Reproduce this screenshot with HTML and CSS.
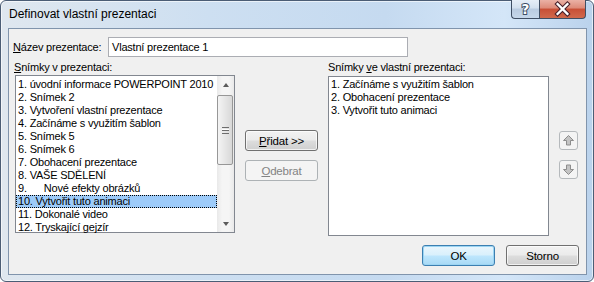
FILE: index.html
```html
<!DOCTYPE html>
<html lang="cs">
<head>
    <meta charset="UTF-8">
    <title>Definovat vlastní prezentaci</title>
    <link rel="stylesheet" href="styles.css">
</head>
<body>

    <!-- Dialog window -->
    <div class="window">

        <!-- Title bar -->
        <div class="titlebar">
            <span class="title">Definovat vlastní prezentaci</span>
            <div class="caption-buttons">
                <div class="cap-btn help">
                    <svg width="28" height="18" viewBox="0 0 28 18">
                        <text x="14" y="14" text-anchor="middle" class="cap-glyph">?</text>
                    </svg>
                </div>
                <div class="cap-btn close">
                    <svg width="46" height="18" viewBox="0 0 46 18">
                        <path d="M18 4 L28 14 M28 4 L18 14" stroke="#47202a" stroke-width="4.6" stroke-linecap="square"/>
                        <path d="M18 4 L28 14 M28 4 L18 14" stroke="#ffffff" stroke-width="2.4" stroke-linecap="square"/>
                    </svg>
                </div>
            </div>
        </div>

        <!-- Client area -->
        <div class="client">
            <div class="name-row">
                <span class="name-label"><u>N</u>ázev prezentace:</span>
                <div class="textbox">Vlastní prezentace 1</div>
            </div>

            <div class="main">
                <!-- All slides -->
                <div class="col col-left">
                    <div class="col-label"><u>S</u>nímky v prezentaci:</div>
                    <div class="listbox">
                        <div class="items">
                            <div class="item">1. úvodní informace POWERPOINT 2010</div>
                            <div class="item">2. Snímek 2</div>
                            <div class="item">3. Vytvoření vlastní prezentace</div>
                            <div class="item">4. Začínáme s využitím šablon</div>
                            <div class="item">5. Snímek 5</div>
                            <div class="item">6. Snímek 6</div>
                            <div class="item">7. Obohacení prezentace</div>
                            <div class="item">8. VAŠE SDĚLENÍ</div>
                            <div class="item">9.<span class="tab">Nové efekty obrázků</span></div>
                            <div class="item selected">10. Vytvořit tuto animaci</div>
                            <div class="item">11. Dokonalé video</div>
                            <div class="item">12. Tryskající gejzír</div>
                        </div>
                        <div class="scrollbar">
                            <div class="sb-arrow"><span class="tri-up"></span></div>
                            <div class="sb-track">
                                <div class="sb-thumb">
                                    <span class="grip"></span>
                                </div>
                            </div>
                            <div class="sb-arrow"><span class="tri-down"></span></div>
                        </div>
                    </div>
                </div>

                <!-- Add / remove -->
                <div class="mid">
                    <div class="btn"><u>P</u>řidat &gt;&gt;</div>
                    <div class="btn disabled"><u>O</u>debrat</div>
                </div>

                <!-- Custom show slides -->
                <div class="col col-right">
                    <div class="col-label right-label">Snímky <u>v</u>e vlastní prezentaci:</div>
                    <div class="listbox tall">
                        <div class="items plain">
                            <div class="item">1. Začínáme s využitím šablon</div>
                            <div class="item">2. Obohacení prezentace</div>
                            <div class="item">3. Vytvořit tuto animaci</div>
                        </div>
                    </div>
                </div>

                <!-- Move up / down -->
                <div class="arrows">
                    <div class="arrow-btn">
                        <svg width="17" height="17" viewBox="0 0 17 17">
                            <polygon points="8.5,3.5 13.5,8.5 10.5,8.5 10.5,13 6.5,13 6.5,8.5 3.5,8.5" fill="#c4c4c4" stroke="#8d8d8d" stroke-width="1"/>
                        </svg>
                    </div>
                    <div class="arrow-btn">
                        <svg width="17" height="17" viewBox="0 0 17 17">
                            <polygon points="8.5,13.5 13.5,8.5 10.5,8.5 10.5,4 6.5,4 6.5,8.5 3.5,8.5" fill="#c4c4c4" stroke="#8d8d8d" stroke-width="1"/>
                        </svg>
                    </div>
                </div>
            </div>

            <div class="footer">
                <div class="btn default">OK</div>
                <div class="btn">Storno</div>
            </div>
        </div>
    </div>

</body>
</html>
```

FILE: styles.css
```css
/* General */
body {
    margin: 0;
    padding: 0;
    font-family: 'Liberation Sans', Arial, sans-serif;
    font-size: 11px;
    color: #000;
    background: #ffffff;
}

u {
    text-decoration: underline;
    text-underline-offset: 1px;
}

/* Window frame */
.window {
    width: 594px;
    height: 282px;
    box-sizing: border-box;
    border: 1px solid #4b5d75;
    border-radius: 6px;
    padding: 0 6px 6px 7px;
    display: flex;
    flex-direction: column;
    background: linear-gradient(to right, #dfe7ef 0%, #cddff1 35%, #c5daf0 65%, #d4e6f8 85%, #bad2ec 100%);
    box-shadow: inset 0 0 0 1px rgba(255, 255, 255, 0.6);
}

/* Title bar */
.titlebar {
    height: 27px;
    display: flex;
    align-items: flex-start;
    justify-content: space-between;
}

.title {
    font-size: 12px;
    line-height: 27px;
    padding-left: 1px;
    color: #000;
}

.caption-buttons {
    display: flex;
    margin-right: 1px;
    margin-top: -1px;
}

.cap-btn {
    height: 18px;
    border: 1px solid #3f4e63;
    border-top: none;
    display: flex;
}

.cap-btn.help {
    width: 27px;
    border-radius: 0 0 0 4px;
    border-right: none;
    background: linear-gradient(#e6eef7 0%, #d3e0ee 45%, #b9cbe0 50%, #c6d7ea 100%);
}

.cap-btn.close {
    width: 45px;
    border-radius: 0 0 4px 0;
    background: linear-gradient(#eab1a5 0%, #dd8a78 45%, #c84f36 50%, #d0694c 100%);
}

.cap-glyph {
    font-family: 'DejaVu Sans', sans-serif;
    font-weight: bold;
    font-size: 14px;
    fill: #ffffff;
    stroke: #3d4f66;
    stroke-width: 2px;
    paint-order: stroke;
}

/* Client area */
.client {
    flex: 1;
    background: #f0f0f0;
    border: 1px solid #8094ac;
    padding: 8px 7px 8px 4px;
    display: flex;
    flex-direction: column;
    letter-spacing: -0.2px;
}

.name-row {
    display: flex;
    align-items: center;
    height: 20px;
}

.name-label {
    width: 95px;
}

.textbox {
    width: 295px;
    height: 18px;
    border: 1px solid #abadb3;
    background: #fff;
    line-height: 18px;
    padding-left: 3px;
    box-sizing: content-box;
}

/* Lists */
.main {
    display: flex;
    margin-top: 4px;
    height: 175px;
}

.col {
    width: 221px;
    display: flex;
    flex-direction: column;
}

.col-left {
    margin-left: 1px;
}

.col-label {
    height: 14px;
    line-height: 13px;
}

.right-label {
    height: 15px;
}

.listbox {
    height: 158px;
    margin-left: 1px;
    border: 1px solid #828790;
    background: #fff;
    display: flex;
    box-sizing: border-box;
}

.listbox.tall {
    height: 160px;
    margin-left: 0;
}

.items {
    flex: 1;
    padding-top: 2px;
}

.items.plain {
    padding-top: 1px;
}

.item {
    height: 13px;
    line-height: 13px;
    padding-left: 2px;
    white-space: nowrap;
    box-sizing: border-box;
}

.item .tab {
    margin-left: 17px;
}

.item.selected {
    background: #9dcbf9;
    outline: 1px dotted #000;
    outline-offset: -1px;
}

/* Scrollbar */
.scrollbar {
    width: 17px;
    display: flex;
    flex-direction: column;
    background: linear-gradient(to right, #e9e9e9, #f5f5f5 30%, #f5f5f5 70%, #e9e9e9);
}

.sb-arrow {
    height: 17px;
    display: flex;
    align-items: center;
    justify-content: center;
}

.tri-up {
    width: 0;
    height: 0;
    border-left: 3.5px solid transparent;
    border-right: 3.5px solid transparent;
    border-bottom: 4px solid #5c5c5c;
}

.tri-down {
    width: 0;
    height: 0;
    border-left: 3.5px solid transparent;
    border-right: 3.5px solid transparent;
    border-top: 4px solid #5c5c5c;
}

.sb-track {
    flex: 1;
    padding-top: 2px;
}

.sb-thumb {
    height: 70px;
    margin: 0 1px 0 0;
    border: 1px solid #979797;
    border-radius: 2px;
    box-sizing: border-box;
    background: linear-gradient(to right, #f4f4f4, #e6e6e6 50%, #d8d8d8);
    display: flex;
    align-items: center;
    justify-content: center;
}

.grip {
    width: 7px;
    height: 5px;
    border-top: 1px solid #6d6d6d;
    border-bottom: 1px solid #6d6d6d;
    background: linear-gradient(#fff 0, #fff 1px, #6d6d6d 1px, #6d6d6d 2px, transparent 2px);
    background-size: 100% 3px;
    background-position: 0 1px;
    background-repeat: no-repeat;
}

/* Buttons */
.mid {
    width: 73px;
    margin-left: 10px;
    padding-top: 69px;
    display: flex;
    flex-direction: column;
    gap: 9px;
}

.btn {
    height: 21px;
    box-sizing: border-box;
    border: 1px solid #707070;
    border-radius: 3px;
    background: linear-gradient(#f2f2f2 0%, #ebebeb 48%, #dddddd 52%, #cfcfcf 100%);
    box-shadow: inset 0 0 0 1px rgba(255, 255, 255, 0.7);
    display: flex;
    align-items: center;
    justify-content: center;
    font-size: 11.5px;
}

.btn.disabled {
    border-color: #adb2b5;
    background: #f4f4f4;
    box-shadow: none;
    color: #838383;
}

.btn.default {
    border-color: #3c7fb1;
    background: linear-gradient(#eaf6fd 0%, #d9f0fc 48%, #bee6fd 52%, #a7d9f5 100%);
    box-shadow: inset 0 0 0 1px #9cd5f3;
}

.col-right {
    margin-left: 10px;
}

.arrows {
    margin-left: 10px;
    padding-top: 70px;
    display: flex;
    flex-direction: column;
    gap: 10px;
}

.arrow-btn {
    width: 19px;
    height: 19px;
    box-sizing: border-box;
    border: 1px solid #b5b9bc;
    border-radius: 3px;
    background: #f4f4f4;
    display: flex;
}

/* Footer */
.footer {
    display: flex;
    justify-content: flex-end;
    gap: 11px;
    margin-top: 9px;
}

.footer .btn {
    width: 73px;
}
```
